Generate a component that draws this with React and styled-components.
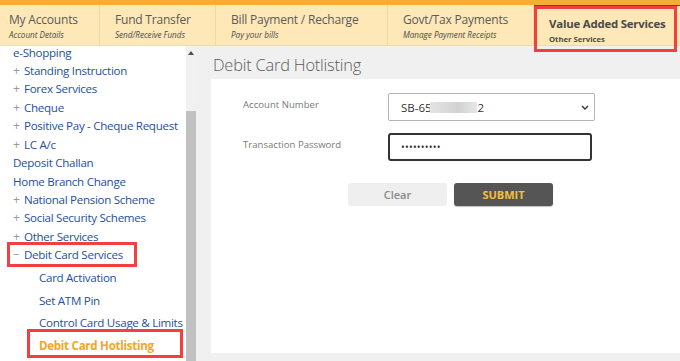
import React from 'react';
import styled, { createGlobalStyle } from 'styled-components';

const GlobalStyle = createGlobalStyle`
  html, body {
    margin: 0;
    padding: 0;
    background: #f0f0f0;
  }
  body {
    font-family: "Open Sans", "Noto Sans", sans-serif;
  }
`;

const Page = styled.div`
  position: relative;
  width: 680px;
  height: 361px;
  overflow: hidden;
  background: #f0f0f0;
`;

const OrangeStrip = styled.div`
  height: 5px;
  background: #f6ad33;
`;

const NavBar = styled.div`
  display: flex;
  height: 40px;
  background: #fee8b7;
  border-bottom: 1px solid #eadcb0;
`;

const NavTab = styled.div`
  position: relative;
  box-sizing: border-box;
  width: ${(p) => p.$w}px;
  padding: ${(p) => (p.$active ? '10px 0 0 15px' : `7px 0 0 ${p.$pad || 15}px`)};
  border-right: ${(p) => (p.$active ? 'none' : '1px solid #f0d9a0')};
  ${(p) => p.$active && 'border-top: 1px solid #2342ff;'}
  white-space: nowrap;
  overflow: hidden;
`;

const NavTitle = styled.div`
  font-size: ${(p) => (p.$active ? '11.4px' : '12px')};
  font-weight: ${(p) => (p.$active ? 700 : 400)};
  color: ${(p) => (p.$active ? '#4a4a4a' : '#5a5a5a')};
  line-height: 16px;
  letter-spacing: ${(p) => (p.$active ? '-0.2px' : '-0.2px')};
`;

const NavSub = styled.div`
  margin-top: 2px;
  font-size: ${(p) => (p.$active ? '7.7px' : '8.1px')};
  font-style: ${(p) => (p.$active ? 'normal' : 'italic')};
  font-weight: ${(p) => (p.$active ? 700 : 400)};
  color: #4a4a4a;
  line-height: 10px;
`;

const Body = styled.div`
  display: flex;
  height: 315px;
`;

const Sidebar = styled.div`
  width: 186px;
  background: #fff;
  overflow: hidden;
  white-space: nowrap;
`;

const MenuItem = styled.div`
  display: flex;
  align-items: center;
  height: ${(p) => (p.$sub ? '22.7px' : p.$top ? '12.25px' : '18.45px')};
  padding-bottom: ${(p) => (p.$top ? '3px' : '0')};
  padding-left: ${(p) => (p.$sub ? 39 : 13)}px;
  font-size: 11.6px;
  letter-spacing: -0.3px;
  color: ${(p) => (p.$current ? '#f5a623' : '#25509c')};
  font-weight: ${(p) => (p.$current ? 700 : 400)};
`;

const Toggle = styled.span`
  display: inline-block;
  width: 11px;
  color: #999;
  font-size: 12px;
`;

const SubList = styled.div`
  padding-top: 2px;
`;

const Scrollbar = styled.div`
  display: flex;
  flex-direction: column;
  width: 10px;
  background: #f1f1f1;
`;

const ScrollArrow = styled.div`
  height: 65px;
  display: flex;
  justify-content: center;
  padding-top: 5px;
  box-sizing: border-box;
`;

const ScrollThumb = styled.div`
  flex: 1;
  background: #c1c1c1;
`;

const Main = styled.div`
  flex: 1;
  display: flex;
  flex-direction: column;
  padding: 0 0 8px 15px;
`;

const PageTitle = styled.h1`
  margin: 0;
  height: 33px;
  padding: 8px 0 0 2px;
  box-sizing: border-box;
  font-size: 16.4px;
  font-weight: 300;
  color: #5c5c5c;
  line-height: 22px;
  letter-spacing: -0.2px;
`;

const Panel = styled.div`
  flex: 1;
  background: #fff;
  padding: 14px 0 0 32px;
`;

const FormRow = styled.div`
  display: flex;
  align-items: center;
  height: 28px;
  margin-bottom: 12px;
`;

const Label = styled.div`
  width: 145px;
  font-size: 9.6px;
  color: #7a7a7a;
  margin-top: -5px;
`;

const SelectBox = styled.div`
  position: relative;
  box-sizing: border-box;
  width: 207px;
  height: 28px;
  border: 1px solid #b5b5b5;
  border-radius: 2px;
  display: flex;
  align-items: center;
  padding-left: 12px;
  font-size: 11.5px;
  color: #333;
`;

const Blur = styled.span`
  display: inline-block;
  width: 47px;
  height: 11px;
  margin: 0 1px 0 -2px;
  background: linear-gradient(90deg, #e4e4e4, #d2d2d2 60%, #e6e6e6);
`;

const Chevron = styled.svg`
  position: absolute;
  right: 5px;
  top: 11px;
`;

const PasswordBox = styled.div`
  box-sizing: border-box;
  width: 204px;
  height: 28px;
  border: 2px solid #333;
  border-radius: 3px;
  display: flex;
  align-items: center;
  padding-left: 11px;
  font-size: 10px;
  letter-spacing: 0.2px;
  color: #333;
`;

const ButtonRow = styled.div`
  display: flex;
  gap: 7px;
  padding-left: 105px;
  margin-top: 22px;
`;

const Button = styled.button`
  width: 99px;
  height: 23px;
  border: none;
  border-radius: 3px;
  font-family: "Open Sans", sans-serif;
  font-size: 11px;
  padding: 0;
  font-weight: ${(p) => (p.$primary ? 700 : 600)};
  background: ${(p) => (p.$primary ? '#555555' : '#efefef')};
  color: ${(p) => (p.$primary ? '#f3c13a' : '#8a8a8a')};
  box-shadow: ${(p) => (p.$primary ? '0 1px 1px rgba(0,0,0,0.25)' : 'none')};
`;

const Highlight = styled.div`
  position: absolute;
  left: ${(p) => p.$x}px;
  top: ${(p) => p.$y}px;
  width: ${(p) => p.$w}px;
  height: ${(p) => p.$h}px;
  box-sizing: border-box;
  border: 3px solid #f1403f;
  pointer-events: none;
`;

const tabs = [
  { title: 'My Accounts', sub: 'Account Details', w: 100, pad: 9 },
  { title: 'Fund Transfer', sub: 'Send/Receive Funds', w: 116 },
  { title: 'Bill Payment / Recharge', sub: 'Pay your bills', w: 172 },
  { title: 'Govt/Tax Payments', sub: 'Manage Payment Receipts', w: 146 },
  { title: 'Value Added Services', sub: 'Other Services', w: 146, active: true },
];

const menu = [
  { label: 'e-Shopping', top: true },
  { label: 'Standing Instruction', toggle: '+' },
  { label: 'Forex Services', toggle: '+' },
  { label: 'Cheque', toggle: '+' },
  { label: 'Positive Pay - Cheque Request', toggle: '+' },
  { label: 'LC A/c', toggle: '+' },
  { label: 'Deposit Challan' },
  { label: 'Home Branch Change' },
  { label: 'National Pension Scheme', toggle: '+' },
  { label: 'Social Security Schemes', toggle: '+' },
  { label: 'Other Services', toggle: '+' },
  { label: 'Debit Card Services', toggle: '−' },
];

const subMenu = [
  'Card Activation',
  'Set ATM Pin',
  'Control Card Usage & Limits',
  'Debit Card Hotlisting',
];

export default function App() {
  return (
    <Page>
      <GlobalStyle />
      <OrangeStrip />
      <NavBar>
        {tabs.map((t) => (
          <NavTab key={t.title} $w={t.w} $pad={t.pad} $active={t.active}>
            <NavTitle $active={t.active}>{t.title}</NavTitle>
            <NavSub $active={t.active}>{t.sub}</NavSub>
          </NavTab>
        ))}
      </NavBar>
      <Body>
        <Sidebar>
          {menu.map((m) => (
            <MenuItem key={m.label} $top={m.top}>
              {m.toggle && <Toggle>{m.toggle}</Toggle>}
              {m.label}
            </MenuItem>
          ))}
          <SubList>
            {subMenu.map((s) => (
              <MenuItem key={s} $sub $current={s === 'Debit Card Hotlisting'}>
                {s}
              </MenuItem>
            ))}
          </SubList>
        </Sidebar>
        <Scrollbar>
          <ScrollArrow>
            <svg width="6" height="4" viewBox="0 0 6 4">
              <path d="M0 4 L3 0 L6 4 Z" fill="#505050" />
            </svg>
          </ScrollArrow>
          <ScrollThumb />
        </Scrollbar>
        <Main>
          <PageTitle>Debit Card Hotlisting</PageTitle>
          <Panel>
            <FormRow>
              <Label>Account Number</Label>
              <SelectBox>
                SB-65<Blur />2
                <Chevron width="8" height="5" viewBox="0 0 8 5">
                  <path d="M1 1 L4 4 L7 1" stroke="#333" strokeWidth="1.4" fill="none" />
                </Chevron>
              </SelectBox>
            </FormRow>
            <FormRow>
              <Label>Transaction Password</Label>
              <PasswordBox>••••••••••</PasswordBox>
            </FormRow>
            <ButtonRow>
              <Button>Clear</Button>
              <Button $primary>SUBMIT</Button>
            </ButtonRow>
          </Panel>
        </Main>
      </Body>
      <Highlight $x={534} $y={6} $w={143} $h={46} />
      <Highlight $x={7} $y={242} $w={130} $h={25} />
      <Highlight $x={27} $y={329} $w={156} $h={29} />
    </Page>
  );
}
